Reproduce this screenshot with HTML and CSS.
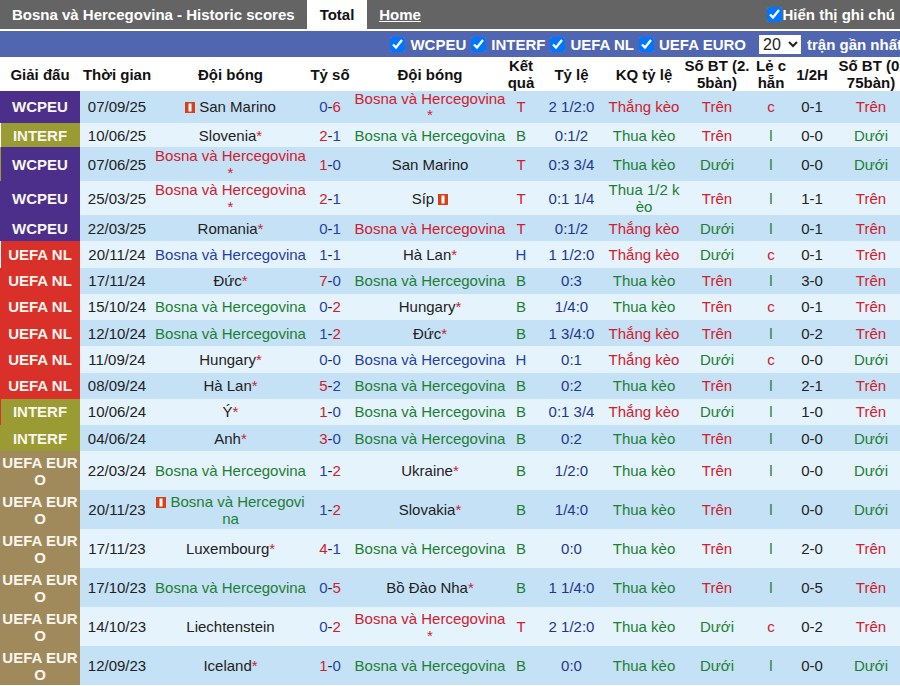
FILE: index.html
```html
<!DOCTYPE html>
<html lang="vi">
<head>
  <meta charset="UTF-8">
  <title>Bosna và Hercegovina - Historic scores</title>
  <link rel="stylesheet" href="styles.css">
</head>
<body>
<div class="page">
  <div class="topbar">
    <span class="title">Bosna và Hercegovina - Historic scores</span>
    <span class="tab active">Total</span>
    <a class="tab home" href="#">Home</a>
    <label class="notes"><input type="checkbox" checked>Hiển thị ghi chú</label>
  </div>

  <div class="filters">
    <label><input type="checkbox" checked>WCPEU</label>
    <label><input type="checkbox" checked>INTERF</label>
    <label><input type="checkbox" checked>UEFA NL</label>
    <label><input type="checkbox" checked>UEFA EURO</label>
    <select class="count"><option>20</option></select>
    <span>trận gần nhất</span>
  </div>

  <table class="scores">
    <colgroup>
      <col class="c-league"><col class="c-time"><col class="c-team"><col class="c-score"><col class="c-team2"><col class="c-res">
      <col class="c-odds"><col class="c-oddsres"><col class="c-bt"><col class="c-lc"><col class="c-half"><col class="c-bt75">
    </colgroup>
    <thead>
      <tr>
        <th>Giải đấu</th><th>Thời gian</th><th>Đội bóng</th><th>Tỷ số</th><th>Đội bóng</th><th>Kết quả</th>
        <th>Tỷ lệ</th><th>KQ tỷ lệ</th><th class="tight">Số BT (2.5bàn)</th><th>Lẻ chẵn</th><th>1/2H</th><th>Số BT (0.75bàn)</th>
      </tr>
    </thead>
    <tbody>
      <tr class="odd first">
        <td class="lg wc">WCPEU</td><td>07/09/25</td>
        <td><svg class="flag" viewBox="0 0 10 11"><rect width="10" height="11" fill="#d8401c"/><rect x="3.5" y="1.5" width="3" height="8" fill="#fff"/></svg> San Marino</td>
        <td><b class="b">0</b>-<b class="r">6</b></td><td class="r">Bosna và Hercegovina<i>*</i></td><td class="r">T</td>
        <td class="n">2 1/2:0</td><td class="r">Thắng kèo</td><td class="r">Trên</td><td class="r">c</td><td>0-1</td><td class="r">Trên</td>
      </tr>
      <tr class="even short">
        <td class="lg it edge-white">INTERF</td><td>10/06/25</td><td>Slovenia<i>*</i></td>
        <td><b class="r">2</b>-<b class="b">1</b></td><td class="g">Bosna và Hercegovina</td><td class="g">B</td>
        <td class="n">0:1/2</td><td class="g">Thua kèo</td><td class="r">Trên</td><td class="g">l</td><td>0-0</td><td class="g">Dưới</td>
      </tr>
      <tr class="odd two">
        <td class="lg wc edge-olive">WCPEU</td><td>07/06/25</td><td class="r">Bosna và Hercegovina<i>*</i></td>
        <td><b class="r">1</b>-<b class="b">0</b></td><td>San Marino</td><td class="r">T</td>
        <td class="n">0:3 3/4</td><td class="g">Thua kèo</td><td class="g">Dưới</td><td class="g">l</td><td>0-0</td><td class="g">Dưới</td>
      </tr>
      <tr class="even two">
        <td class="lg wc">WCPEU</td><td>25/03/25</td><td class="r">Bosna và Hercegovina<i>*</i></td>
        <td><b class="r">2</b>-<b class="b">1</b></td><td>Síp <svg class="flag" viewBox="0 0 10 11"><rect width="10" height="11" fill="#d8401c"/><rect x="3.5" y="1.5" width="3" height="8" fill="#fff"/></svg></td><td class="r">T</td>
        <td class="n">0:1 1/4</td><td class="g">Thua 1/2 kèo</td><td class="r">Trên</td><td class="g">l</td><td>1-1</td><td class="r">Trên</td>
      </tr>
      <tr class="odd">
        <td class="lg wc">WCPEU</td><td>22/03/25</td><td>Romania<i>*</i></td>
        <td><b class="b">0</b>-<b class="b">1</b></td><td class="r">Bosna và Hercegovina</td><td class="r">T</td>
        <td class="n">0:1/2</td><td class="r">Thắng kèo</td><td class="g">Dưới</td><td class="g">l</td><td>0-1</td><td class="r">Trên</td>
      </tr>
      <tr class="even">
        <td class="lg nl edge-white">UEFA NL</td><td>20/11/24</td><td class="b">Bosna và Hercegovina</td>
        <td><b class="b">1</b>-<b class="b">1</b></td><td>Hà Lan<i>*</i></td><td class="b">H</td>
        <td class="n">1 1/2:0</td><td class="r">Thắng kèo</td><td class="g">Dưới</td><td class="r">c</td><td>0-1</td><td class="r">Trên</td>
      </tr>
      <tr class="odd">
        <td class="lg nl">UEFA NL</td><td>17/11/24</td><td>Đức<i>*</i></td>
        <td><b class="r">7</b>-<b class="b">0</b></td><td class="g">Bosna và Hercegovina</td><td class="g">B</td>
        <td class="n">0:3</td><td class="g">Thua kèo</td><td class="r">Trên</td><td class="g">l</td><td>3-0</td><td class="r">Trên</td>
      </tr>
      <tr class="even">
        <td class="lg nl">UEFA NL</td><td>15/10/24</td><td class="g">Bosna và Hercegovina</td>
        <td><b class="b">0</b>-<b class="r">2</b></td><td>Hungary<i>*</i></td><td class="g">B</td>
        <td class="n">1/4:0</td><td class="g">Thua kèo</td><td class="r">Trên</td><td class="r">c</td><td>0-1</td><td class="r">Trên</td>
      </tr>
      <tr class="odd">
        <td class="lg nl">UEFA NL</td><td>12/10/24</td><td class="g">Bosna và Hercegovina</td>
        <td><b class="b">1</b>-<b class="r">2</b></td><td>Đức<i>*</i></td><td class="g">B</td>
        <td class="n">1 3/4:0</td><td class="r">Thắng kèo</td><td class="r">Trên</td><td class="g">l</td><td>0-2</td><td class="r">Trên</td>
      </tr>
      <tr class="even">
        <td class="lg nl">UEFA NL</td><td>11/09/24</td><td>Hungary<i>*</i></td>
        <td><b class="b">0</b>-<b class="b">0</b></td><td class="b">Bosna và Hercegovina</td><td class="b">H</td>
        <td class="n">0:1</td><td class="r">Thắng kèo</td><td class="g">Dưới</td><td class="r">c</td><td>0-0</td><td class="g">Dưới</td>
      </tr>
      <tr class="odd">
        <td class="lg nl">UEFA NL</td><td>08/09/24</td><td>Hà Lan<i>*</i></td>
        <td><b class="r">5</b>-<b class="b">2</b></td><td class="g">Bosna và Hercegovina</td><td class="g">B</td>
        <td class="n">0:2</td><td class="g">Thua kèo</td><td class="r">Trên</td><td class="g">l</td><td>2-1</td><td class="r">Trên</td>
      </tr>
      <tr class="even">
        <td class="lg it edge-red">INTERF</td><td>10/06/24</td><td>Ý<i>*</i></td>
        <td><b class="r">1</b>-<b class="b">0</b></td><td class="g">Bosna và Hercegovina</td><td class="g">B</td>
        <td class="n">0:1 3/4</td><td class="r">Thắng kèo</td><td class="g">Dưới</td><td class="g">l</td><td>1-0</td><td class="r">Trên</td>
      </tr>
      <tr class="odd">
        <td class="lg it">INTERF</td><td>04/06/24</td><td>Anh<i>*</i></td>
        <td><b class="r">3</b>-<b class="b">0</b></td><td class="g">Bosna và Hercegovina</td><td class="g">B</td>
        <td class="n">0:2</td><td class="g">Thua kèo</td><td class="r">Trên</td><td class="g">l</td><td>0-0</td><td class="g">Dưới</td>
      </tr>
      <tr class="even tall">
        <td class="lg eu">UEFA EURO</td><td>22/03/24</td><td class="g">Bosna và Hercegovina</td>
        <td><b class="b">1</b>-<b class="r">2</b></td><td>Ukraine<i>*</i></td><td class="g">B</td>
        <td class="n">1/2:0</td><td class="g">Thua kèo</td><td class="r">Trên</td><td class="g">l</td><td>0-0</td><td class="g">Dưới</td>
      </tr>
      <tr class="odd tall">
        <td class="lg eu">UEFA EURO</td><td>20/11/23</td>
        <td class="g"><svg class="flag" viewBox="0 0 10 11"><rect width="10" height="11" fill="#d8401c"/><rect x="3.5" y="1.5" width="3" height="8" fill="#fff"/></svg> Bosna và Hercegovina</td>
        <td><b class="b">1</b>-<b class="r">2</b></td><td>Slovakia<i>*</i></td><td class="g">B</td>
        <td class="n">1/4:0</td><td class="g">Thua kèo</td><td class="r">Trên</td><td class="g">l</td><td>0-0</td><td class="g">Dưới</td>
      </tr>
      <tr class="even tall">
        <td class="lg eu">UEFA EURO</td><td>17/11/23</td><td>Luxembourg<i>*</i></td>
        <td><b class="r">4</b>-<b class="b">1</b></td><td class="g">Bosna và Hercegovina</td><td class="g">B</td>
        <td class="n">0:0</td><td class="g">Thua kèo</td><td class="r">Trên</td><td class="g">l</td><td>2-0</td><td class="r">Trên</td>
      </tr>
      <tr class="odd tall">
        <td class="lg eu">UEFA EURO</td><td>17/10/23</td><td class="g">Bosna và Hercegovina</td>
        <td><b class="b">0</b>-<b class="r">5</b></td><td>Bồ Đào Nha<i>*</i></td><td class="g">B</td>
        <td class="n">1 1/4:0</td><td class="g">Thua kèo</td><td class="r">Trên</td><td class="g">l</td><td>0-5</td><td class="r">Trên</td>
      </tr>
      <tr class="even tall">
        <td class="lg eu">UEFA EURO</td><td>14/10/23</td><td>Liechtenstein</td>
        <td><b class="b">0</b>-<b class="r">2</b></td><td class="r">Bosna và Hercegovina<i>*</i></td><td class="r">T</td>
        <td class="n">2 1/2:0</td><td class="g">Thua kèo</td><td class="g">Dưới</td><td class="r">c</td><td>0-2</td><td class="r">Trên</td>
      </tr>
      <tr class="odd tall">
        <td class="lg eu">UEFA EURO</td><td>12/09/23</td><td>Iceland<i>*</i></td>
        <td><b class="r">1</b>-<b class="b">0</b></td><td class="g">Bosna và Hercegovina</td><td class="g">B</td>
        <td class="n">0:0</td><td class="g">Thua kèo</td><td class="g">Dưới</td><td class="g">l</td><td>0-0</td><td class="g">Dưới</td>
      </tr>
    </tbody>
  </table>
</div>
</body>
</html>
```
FILE: styles.css
```css
html, body {
  margin: 0;
  height: 686px;
  overflow: hidden;
  background-color: #fff;
}
body {
  font-family: "Liberation Sans", Arial, sans-serif;
  font-size: 15px;
  line-height: 17px;
  color: #222;
}
.page {
  width: 906px;
}
input[type="checkbox"] {
  width: 15px;
  height: 15px;
}
.topbar {
  display: flex;
  align-items: center;
  width: 900px;
  height: 29px;
  background-color: #646464;
  color: #fff;
  font-weight: bold;
  box-sizing: border-box;
  padding-left: 12px;
}
.title {
  width: 295px;
}
.tab {
  width: 60px;
  height: 29px;
  line-height: 29px;
  text-align: center;
  color: #fff;
}
.tab.active {
  background-color: #fff;
  color: #111;
}
.tab.home {
  margin-left: 3px;
}
.notes {
  display: flex;
  align-items: center;
  margin-left: auto;
  margin-right: 5px;
}
.notes input {
  margin: 0 1px 0 0;
}
.filters {
  display: flex;
  align-items: center;
  justify-content: flex-end;
  height: 26px;
  margin-top: 2px;
  padding-right: 4px;
  background-color: #5066b0;
  color: #fff;
  font-weight: bold;
  white-space: nowrap;
}
.filters label {
  display: flex;
  align-items: center;
  margin-right: 5px;
}
.filters input {
  margin: 0 5px 0 0;
}
.filters .count {
  width: 42px;
  height: 19px;
  margin: 0 6px 0 8px;
  font-family: inherit;
  font-size: 16px;
  border: none;
  border-radius: 0;
  background-color: #fff;
  color: #222;
}
.scores {
  table-layout: fixed;
  width: 906px;
  border-collapse: collapse;
  word-break: break-all;
}
.c-league { width: 80px; }
.c-time { width: 74px; }
.c-team { width: 153px; }
.c-score { width: 46px; }
.c-team2 { width: 154px; }
.c-res { width: 28px; }
.c-odds { width: 73px; }
.c-oddsres { width: 72px; }
.c-bt { width: 74px; }
.c-lc { width: 34px; }
.c-half { width: 48px; }
.c-bt75 { width: 70px; }
.scores th, .scores td {
  padding: 0;
  text-align: center;
  vertical-align: middle;
}
.scores th {
  height: 34px;
  color: #111;
}
.scores th.tight {
  padding: 0 1px;
}
.scores tr {
  height: 26.25px;
}
.scores tr.first { height: 32px; }
.scores tr.first td { line-height: 16px; }
.scores tr.short { height: 24px; }
.scores tr.two { height: 34px; }
.scores tr.tall { height: 39px; }
.odd { background-color: #c5e1f5; }
.even { background-color: #e5f3fc; }
.scores .lg {
  color: #f8f6ee;
  font-weight: bold;
}
.wc { background-color: #4b2f8b; }
.it { background-color: #9a9b33; }
.nl { background-color: #d9302a; }
.eu { background-color: #a08a5b; }
.edge-white { box-shadow: inset 1px 0 #fff; }
.edge-olive { box-shadow: inset 1px 0 #9a9b33; }
.edge-red { box-shadow: inset 1px 0 #d9302a; }
.r { color: #d0202e; font-weight: normal; }
.g { color: #1d7f33; font-weight: normal; }
.b { color: #2540a8; font-weight: normal; }
.n { color: #1f3690; }
i {
  font-style: normal;
  color: #d0202e;
}
.flag {
  display: inline-block;
  width: 10px;
  height: 11px;
  vertical-align: -1px;
}
```
